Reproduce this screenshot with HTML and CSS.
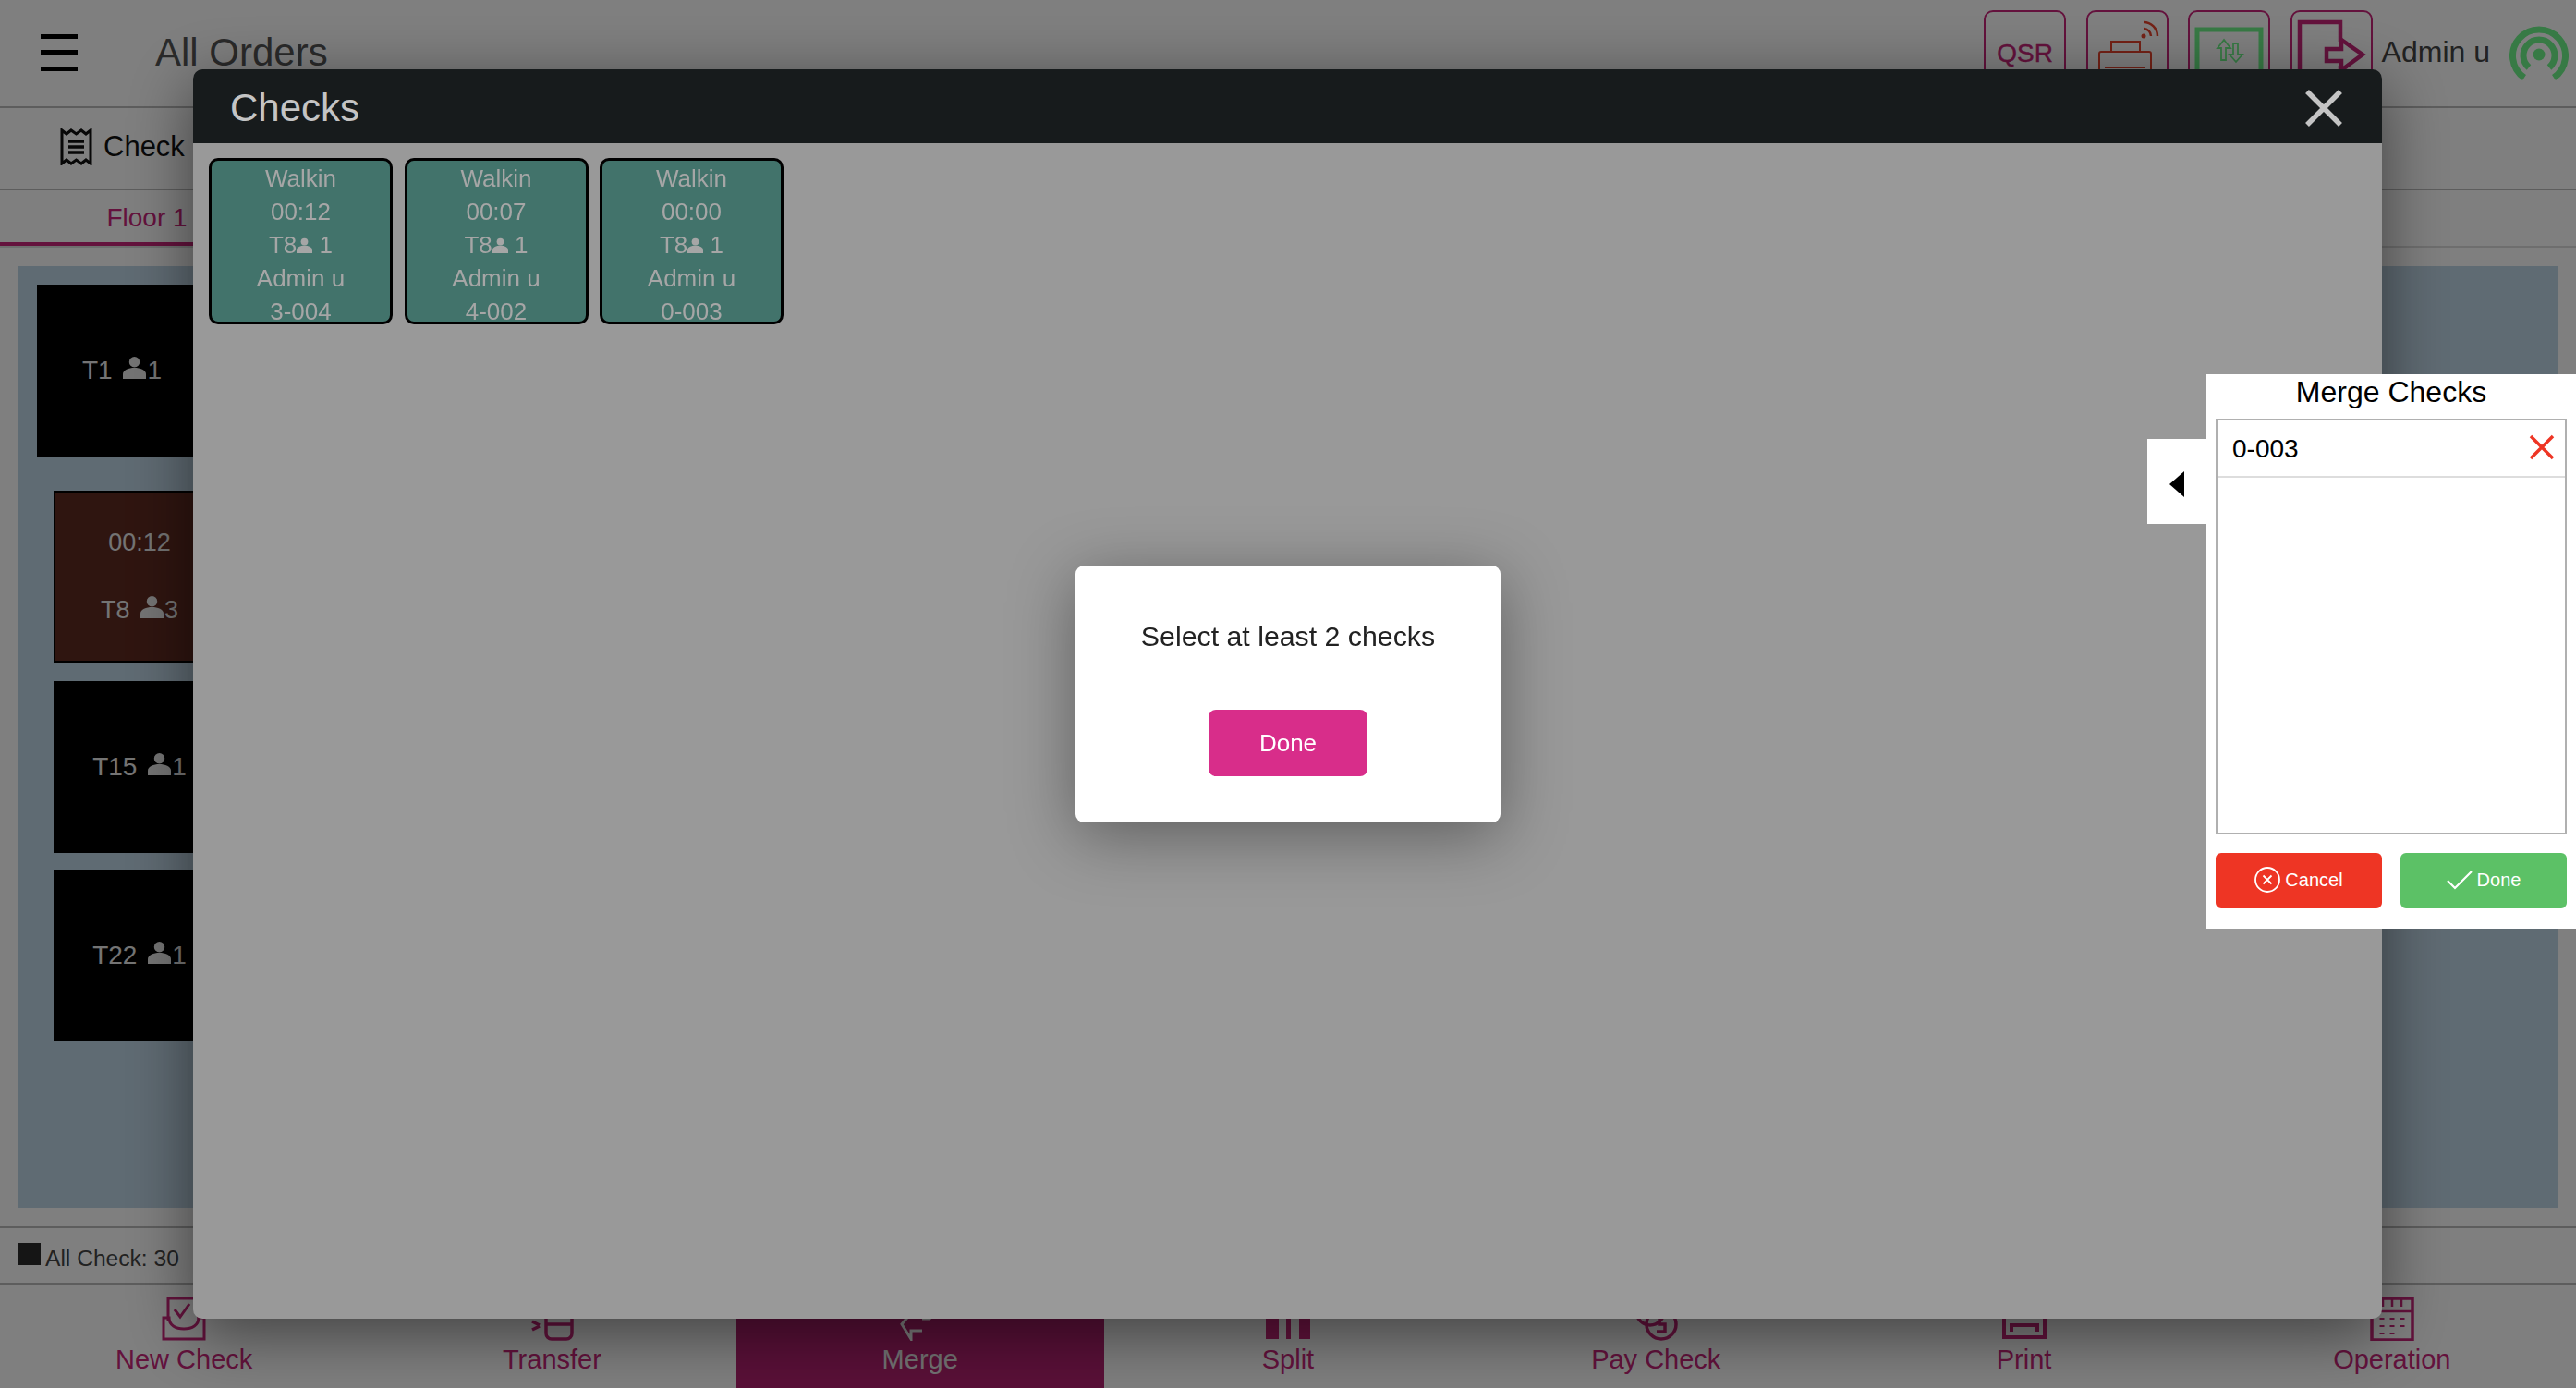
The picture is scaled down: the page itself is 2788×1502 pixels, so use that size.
FILE: index.html
```html
<!DOCTYPE html>
<html>
<head>
    <title>All Orders</title>
    <link rel="stylesheet" href="styles.css">
</head>
<body>
    <svg class="defs" width="0" height="0">
        <symbol id="person" viewBox="0 0 24 24">
            <circle cx="12" cy="6.500" r="5.500" fill="currentColor"/>
            <path d="M0 24v-5c0-4 6-6.500 12-6.500s12 2.500 12 6.500v5z" fill="currentColor"/>
        </symbol>
    </svg>

    <div class="app">
        <header class="top-bar">
            <div class="hamburger"><span></span><span></span><span></span></div>
            <div class="page-title">All Orders</div>
            <div class="top-actions">
                <div class="top-btn qsr">QSR</div>
                <div class="top-btn">
                    <svg viewBox="0 0 89 92" fill="none" stroke="#e8432c" stroke-width="2">
                        <path d="M14 80V47a2 2 0 0 1 2-2h52a2 2 0 0 1 2 2v33M27 45V34h31v11M20 62h44"/>
                        <circle cx="62" cy="28" r="2.500" fill="#e8432c" stroke="none"/>
                        <path d="M62 20a8 8 0 0 1 8 8M62 13a15 15 0 0 1 15 15" stroke-width="2.500"/>
                    </svg>
                </div>
                <div class="top-btn">
                    <svg viewBox="0 0 89 92" fill="none" stroke="#6ff58a">
                        <path d="M10 100V21h69v79" stroke-width="5"/>
                        <path d="M39 32l-7 9h4v13h5V41h5zM52 56l-7-8h4V36h5v12h5z" stroke-width="1.800"/>
                    </svg>
                </div>
                <div class="top-btn">
                    <svg viewBox="0 0 89 92" fill="none" stroke="#c8257a" stroke-width="4.500">
                        <path d="M10 100V13h44v21M54 60v40"/>
                        <path d="M39 42h16V32l23 16-23 17V55H39z"/>
                    </svg>
                </div>
            </div>
            <div class="user-name">Admin u</div>
            <svg class="signal" viewBox="0 0 64 60" fill="none" stroke="#6ff58a" stroke-width="7">
                <circle cx="32" cy="32" r="6.500" fill="#6ff58a" stroke="none"/>
                <path d="M21 46a17 17 0 1 1 22 0"/>
                <path d="M16 57a28.500 28.500 0 1 1 32 0"/>
            </svg>
        </header>

        <div class="check-bar">
            <svg class="receipt" viewBox="0 0 35 40" fill="none" stroke="#111" stroke-width="3">
                <path d="M2 2l5 4 5-4 5.500 4 5.500-4 5 4 5-4v36l-5-4-5 4-5.500-4-5.500 4-5-4-5 4z"/>
                <path d="M9 14h17M9 20h17M9 26h17" stroke-width="3.500"/>
            </svg>
            <span>Check</span>
        </div>

        <div class="floor-tabs">
            <div class="floor-tab">Floor 1</div>
        </div>

        <div class="floor">
            <div class="table table-first">
                <div>T1 <svg class="person"><use href="#person"/></svg>1</div>
            </div>
            <div class="table table-busy">
                <div>00:12</div>
                <div>T8 <svg class="person"><use href="#person"/></svg>3</div>
            </div>
            <div class="table table-t15">
                <div>T15 <svg class="person"><use href="#person"/></svg>1</div>
            </div>
            <div class="table table-t22">
                <div>T22 <svg class="person"><use href="#person"/></svg>1</div>
            </div>
        </div>

        <div class="status-bar">
            <span class="swatch"></span>
            <span>All Check: 30</span>
        </div>

        <nav class="bottom-nav">
            <div class="nav-item">
                <svg viewBox="0 0 48 48" fill="none" stroke="#c8257a" stroke-width="3">
                    <path d="M7 26V2h33v24M14 14l6 8 10-14"/>
                    <path d="M2 23v23h44V23h-6c0 8-7 12-16 12S8 31 8 23z"/>
                </svg>
                <span>New Check</span>
            </div>
            <div class="nav-item">
                <svg viewBox="0 0 48 48" fill="none" stroke="#c8257a" stroke-width="3.500">
                    <rect x="18" y="14" width="28" height="32" rx="6"/>
                    <path d="M18 30h28M3 27l8 4M3 36l8-4"/>
                </svg>
                <span>Transfer</span>
            </div>
            <div class="nav-item active">
                <svg viewBox="0 0 48 48" fill="none" stroke="#fff" stroke-width="3">
                    <path d="M14 18L4 30l10 16v-9h12M26 24h8l6-6"/>
                </svg>
                <span>Merge</span>
            </div>
            <div class="nav-item">
                <svg viewBox="0 0 48 48" fill="#c8257a">
                    <rect x="0" y="24" width="14" height="22"/>
                    <rect x="0" y="4" width="14" height="12"/>
                    <rect x="22" y="4" width="5" height="42"/>
                    <rect x="36" y="22" width="12" height="24"/>
                    <rect x="36" y="4" width="12" height="10"/>
                </svg>
                <span>Split</span>
            </div>
            <div class="nav-item">
                <svg viewBox="0 0 48 48" fill="none" stroke="#c8257a" stroke-width="3.500">
                    <circle cx="18" cy="16" r="15"/>
                    <circle cx="30" cy="30" r="16"/>
                    <path d="M36 22h-8v8h6v8h-9"/>
                </svg>
                <span>Pay Check</span>
            </div>
            <div class="nav-item">
                <svg viewBox="0 0 48 48" fill="none" stroke="#c8257a" stroke-width="4">
                    <path d="M2 18h44v26H2z"/>
                    <path d="M10 38v-7h28v7"/>
                </svg>
                <span>Print</span>
            </div>
            <div class="nav-item">
                <svg viewBox="0 0 48 48" fill="none" stroke="#c8257a" stroke-width="3.500">
                    <rect x="2" y="2" width="44" height="45"/>
                    <path d="M2 16h44M14 3v8M24 3v8M34 3v8" stroke-width="2.500"/>
                    <path d="M13 23v2M24 23v2M35 23v2M13 31v2M24 31v2M35 31v2M13 39v2M24 39v2" stroke-width="5"/>
                </svg>
                <span>Operation</span>
            </div>
        </nav>
    </div>

    <div class="backdrop"></div>

    <div class="modal">
        <div class="modal-header">
            <span>Checks</span>
            <svg class="modal-close" viewBox="0 0 40 40" stroke="#c4c4c4" stroke-width="5.500">
                <path d="M2 2l36 36M38 2L2 38"/>
            </svg>
        </div>
        <div class="modal-body">
            <div class="check-card">
                <div>Walkin</div>
                <div>00:12</div>
                <div>T8<svg class="person person-small"><use href="#person"/></svg> 1</div>
                <div>Admin u</div>
                <div>3-004</div>
            </div>
            <div class="check-card">
                <div>Walkin</div>
                <div>00:07</div>
                <div>T8<svg class="person person-small"><use href="#person"/></svg> 1</div>
                <div>Admin u</div>
                <div>4-002</div>
            </div>
            <div class="check-card">
                <div>Walkin</div>
                <div>00:00</div>
                <div>T8<svg class="person person-small"><use href="#person"/></svg> 1</div>
                <div>Admin u</div>
                <div>0-003</div>
            </div>
        </div>
    </div>

    <div class="merge-panel">
        <div class="merge-toggle"><span class="arrow-left"></span></div>
        <div class="merge-title">Merge Checks</div>
        <div class="merge-list">
            <div class="merge-row">
                <span>0-003</span>
                <svg class="merge-remove" viewBox="0 0 28 28" stroke="#ee3524" stroke-width="3.500">
                    <path d="M2 2l24 24M26 2L2 26"/>
                </svg>
            </div>
        </div>
        <div class="merge-actions">
            <div class="merge-btn cancel">
                <svg viewBox="0 0 28 28" fill="none" stroke="#fff" stroke-width="1.800">
                    <circle cx="14" cy="14" r="13"/>
                    <path d="M9.500 9.500l9 9M18.500 9.500l-9 9"/>
                </svg>
                Cancel
            </div>
            <div class="merge-btn done">
                <svg viewBox="0 0 28 22" fill="none" stroke="#fff" stroke-width="2.200">
                    <path d="M1 12l8 8L27 2"/>
                </svg>
                Done
            </div>
        </div>
    </div>

    <div class="alert">
        <div class="alert-text">Select at least 2 checks</div>
        <div class="alert-btn">Done</div>
    </div>
</body>
</html>
```

FILE: styles.css
```css
* {
    box-sizing: border-box;
}
html, body {
    margin: 0;
    height: 100%;
}
body {
    font-family: "Liberation Sans", Arial, sans-serif;
    overflow: hidden;
    background-color: #fff;
}
.defs {
    position: absolute;
}
.app {
    display: flex;
    flex-direction: column;
    height: 1502px;
    color: #444;
}

/* top bar */
.top-bar {
    display: flex;
    align-items: center;
    height: 117px;
    padding: 0 8px 2px 44px;
    border-bottom: 2px solid #bbb;
}
.hamburger {
    display: flex;
    flex-direction: column;
    justify-content: space-between;
    width: 40px;
    height: 40px;
}
.hamburger span {
    display: block;
    height: 5px;
    background-color: #000;
}
.page-title {
    margin-left: 84px;
    font-size: 42px;
    color: #555;
}
.top-actions {
    display: flex;
    gap: 21.5px;
    margin-left: auto;
}
.top-btn {
    width: 89px;
    height: 92px;
    border: 2px solid #c8257a;
    border-radius: 10px;
}
.top-btn svg {
    display: block;
    width: 89px;
    height: 92px;
    margin: -2px;
    overflow: visible;
}
.qsr {
    padding-top: 29px;
    text-align: center;
    font-size: 28px;
    color: #c8257a;
    -webkit-text-stroke: 0.4px #c8257a;
}
.user-name {
    margin-left: 10px;
    font-size: 32px;
    color: #444;
}
.signal {
    width: 64px;
    height: 60px;
    margin-left: 21px;
}

/* check row and floor tabs */
.check-bar {
    display: flex;
    align-items: center;
    gap: 12px;
    height: 89px;
    padding: 0 0 3px 65px;
    border-bottom: 2px solid #bbb;
    font-size: 31px;
    color: #111;
}
.receipt {
    width: 35px;
    height: 40px;
}
.floor-tabs {
    height: 62px;
    border-bottom: 2px solid #ddd;
}
.floor-tab {
    width: 318px;
    height: 60px;
    padding-top: 14px;
    border-bottom: 4px solid #c8257a;
    text-align: center;
    font-size: 28px;
    color: #c8257a;
}

/* floor plan */
.floor {
    flex: 1;
    margin: 20px;
    padding-top: 20px;
    background-color: #bfd6e6;
}
.table {
    display: flex;
    flex-direction: column;
    justify-content: center;
    align-items: center;
    width: 186px;
    height: 186px;
    margin-left: 38px;
    background-color: #000;
    font-size: 28px;
    color: #e8e8e8;
}
.table-first {
    margin-left: 20px;
    width: 184px;
}
.table-busy {
    margin-top: 37px;
    border: 2px solid #000;
    background-color: #5f2a20;
    line-height: 73px;
    font-size: 27px;
}
.table-t15 {
    margin-top: 20px;
}
.table-t22 {
    margin-top: 18px;
}
.person {
    display: inline-block;
    width: 25px;
    height: 25px;
    margin: 0 1px 0 4px;
}
.person-small {
    width: 17px;
    height: 17px;
    margin: 0;
}

/* status and nav */
.status-bar {
    display: flex;
    align-items: flex-end;
    gap: 5px;
    height: 63px;
    padding: 0 0 13px 20px;
    border-top: 2px solid #bbb;
    border-bottom: 2px solid #bbb;
    font-size: 24.6px;
    line-height: 26px;
    color: #444;
}
.swatch {
    width: 24px;
    height: 24px;
    margin-bottom: 6px;
    background-color: #2a2a2a;
}
.bottom-nav {
    display: flex;
    height: 112px;
}
.nav-item {
    flex: 1;
    display: flex;
    flex-direction: column;
    align-items: center;
    padding-top: 13px;
    font-size: 29px;
    color: #c8257a;
}
.nav-item svg {
    width: 48px;
    height: 48px;
    margin-bottom: 4px;
}
.nav-item.active {
    background-color: #b42070;
    color: #e8e8e8;
}

/* dim layer and checks dialog */
.backdrop {
    position: fixed;
    inset: 0;
    background-color: rgba(0,0,0,0.5);
}
.modal {
    position: fixed;
    left: 209px;
    top: 75px;
    width: 2369px;
    height: 1352px;
    border-radius: 10px;
    background-color: #999;
    box-shadow: 0 16px 70px rgba(0,0,0,0.5);
    overflow: hidden;
}
.modal-header {
    display: flex;
    align-items: center;
    justify-content: space-between;
    height: 80px;
    padding: 3px 43px 0 40px;
    background-color: #171b1c;
    font-size: 42px;
    color: #c4c4c4;
}
.modal-close {
    width: 40px;
    height: 40px;
}
.modal-body {
    display: flex;
    gap: 12.5px;
    padding: 16px 17px;
}
.check-card {
    width: 199px;
    height: 180px;
    padding-top: 1px;
    border: 3px solid #000;
    border-radius: 10px;
    background-color: #42736b;
    overflow: hidden;
    text-align: center;
    font-size: 26px;
    line-height: 36px;
    color: #a6a6a6;
}

/* merge side panel */
.merge-panel {
    position: fixed;
    left: 2388px;
    top: 405px;
    width: 400px;
    height: 600px;
    padding: 0 10px;
    background-color: #fff;
    color: #000;
}
.merge-toggle {
    position: absolute;
    left: -64px;
    top: 70px;
    display: flex;
    align-items: center;
    justify-content: center;
    width: 64px;
    height: 92px;
    padding-top: 6px;
    background-color: #fff;
}
.arrow-left {
    width: 0;
    height: 0;
    border-top: 14px solid transparent;
    border-bottom: 14px solid transparent;
    border-right: 16px solid #000;
}
.merge-title {
    height: 48px;
    text-align: center;
    font-size: 32px;
    line-height: 39px;
}
.merge-list {
    height: 450px;
    border: 2px solid #b0b0b0;
}
.merge-row {
    display: flex;
    align-items: center;
    justify-content: space-between;
    height: 62px;
    padding: 2px 11px 0 16px;
    border-bottom: 2px solid #ddd;
    font-size: 28px;
}
.merge-remove {
    width: 28px;
    height: 28px;
    margin-top: -4px;
}
.merge-actions {
    display: flex;
    gap: 20px;
    margin-top: 20px;
}
.merge-btn {
    display: flex;
    align-items: center;
    justify-content: center;
    gap: 5px;
    width: 180px;
    height: 60px;
    padding-bottom: 2px;
    border-radius: 6px;
    font-size: 20px;
    color: #fff;
}
.merge-btn svg {
    width: 28px;
    height: 28px;
}
.cancel {
    background-color: #ee3524;
}
.done {
    background-color: #5cc166;
}

/* alert */
.alert {
    position: fixed;
    left: 1164px;
    top: 612px;
    display: flex;
    flex-direction: column;
    align-items: center;
    width: 460px;
    height: 278px;
    padding-top: 59px;
    border-radius: 9px;
    background-color: #fff;
    box-shadow: 0 14px 70px rgba(0,0,0,0.38);
}
.alert-text {
    font-size: 30.3px;
    line-height: 36px;
    color: #222;
}
.alert-btn {
    display: flex;
    align-items: center;
    justify-content: center;
    width: 172px;
    height: 72px;
    margin-top: 61px;
    border-radius: 8px;
    background-color: #d82d8a;
    font-size: 26px;
    color: #fff;
}
```
